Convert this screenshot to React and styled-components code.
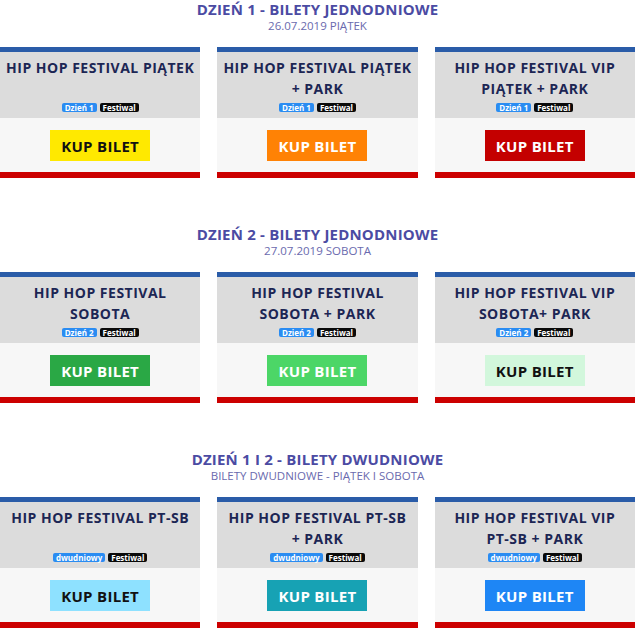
import React from 'react';
import styled, { createGlobalStyle } from 'styled-components';

const GlobalStyle = createGlobalStyle`
  body {
    margin: 0;
    background: #ffffff;
    font-family: "Open Sans", "Noto Sans", sans-serif;
  }
`;

const Page = styled.div`
  width: 635px;
`;

const Section = styled.section`
  margin-bottom: 47px;

  &:last-child {
    margin-bottom: 0;
  }
`;

const Heading = styled.h2`
  margin: 0;
  text-align: center;
  font-size: 15px;
  line-height: 18px;
  font-weight: 700;
  color: #4b4ba3;
  letter-spacing: 0.2px;
`;

const SubHeading = styled.div`
  text-align: center;
  font-size: 11.5px;
  line-height: 15px;
  color: #6a6aae;
  margin-bottom: 14px;
`;

const CardGrid = styled.div`
  display: grid;
  grid-template-columns: repeat(3, minmax(0, 1fr));
  column-gap: 17px;
`;

const Card = styled.div`
  border-top: 5px solid #2a5ca8;
  border-bottom: 6px solid #cc0000;
  background: #f7f7f7;
`;

const CardHeader = styled.div`
  height: 66px;
  box-sizing: border-box;
  padding: 5px 4px 6px;
  background: #dcdcdc;
  display: flex;
  flex-direction: column;
  align-items: center;
`;

const Title = styled.div`
  flex: 1;
  text-align: center;
  font-size: 14px;
  line-height: 21px;
  font-weight: 700;
  letter-spacing: 0.5px;
  color: #1c2654;
  white-space: nowrap;
`;

const Badges = styled.div`
  display: flex;
  gap: 3px;
`;

const Badge = styled.span`
  font-size: 8px;
  line-height: 9px;
  font-weight: 700;
  padding: 0 3px;
  border-radius: 2px;
  color: #ffffff;
  background: ${p => (p.$dark ? '#0a0a0a' : '#2a8cf2')};
`;

const CardBody = styled.div`
  display: flex;
  justify-content: center;
  padding: 12px 0 11px;
`;

const BuyButton = styled.a`
  display: flex;
  align-items: center;
  justify-content: center;
  width: 100px;
  height: 31px;
  background: ${p => p.$bg};
  color: ${p => (p.$light ? '#111111' : '#ffffff')};
  font-size: 15px;
  font-weight: 700;
  letter-spacing: 0.3px;
  text-decoration: none;
  cursor: pointer;
`;

const sections = [
  {
    title: 'DZIEŃ 1 - BILETY JEDNODNIOWE',
    sub: '26.07.2019 PIĄTEK',
    tag: 'Dzień 1',
    cards: [
      { lines: ['HIP HOP FESTIVAL PIĄTEK'], bg: '#ffe900', light: true },
      { lines: ['HIP HOP FESTIVAL PIĄTEK', '+ PARK'], bg: '#ff8205' },
      { lines: ['HIP HOP FESTIVAL VIP', 'PIĄTEK + PARK'], bg: '#c40000' },
    ],
  },
  {
    title: 'DZIEŃ 2 - BILETY JEDNODNIOWE',
    sub: '27.07.2019 SOBOTA',
    tag: 'Dzień 2',
    cards: [
      { lines: ['HIP HOP FESTIVAL', 'SOBOTA'], bg: '#2aa845' },
      { lines: ['HIP HOP FESTIVAL', 'SOBOTA + PARK'], bg: '#4cd667' },
      { lines: ['HIP HOP FESTIVAL VIP', 'SOBOTA+ PARK'], bg: '#d2f7dc', light: true },
    ],
  },
  {
    title: 'DZIEŃ 1 I 2 - BILETY DWUDNIOWE',
    sub: 'BILETY DWUDNIOWE - PIĄTEK I SOBOTA',
    tag: 'dwudniowy',
    cards: [
      { lines: ['HIP HOP FESTIVAL PT-SB'], bg: '#8ee1ff', light: true },
      { lines: ['HIP HOP FESTIVAL PT-SB', '+ PARK'], bg: '#17a2b4' },
      { lines: ['HIP HOP FESTIVAL VIP', 'PT-SB + PARK'], bg: '#1e86f5' },
    ],
  },
];

function App() {
  return (
    <Page>
      <GlobalStyle />
      {sections.map((section, i) => (
        <Section key={i}>
          <Heading>{section.title}</Heading>
          <SubHeading>{section.sub}</SubHeading>
          <CardGrid>
            {section.cards.map((card, j) => (
              <Card key={j}>
                <CardHeader>
                  <Title>
                    {card.lines.map((line, k) => (
                      <div key={k}>{line}</div>
                    ))}
                  </Title>
                  <Badges>
                    <Badge>{section.tag}</Badge>
                    <Badge $dark>Festiwal</Badge>
                  </Badges>
                </CardHeader>
                <CardBody>
                  <BuyButton $bg={card.bg} $light={card.light}>KUP BILET</BuyButton>
                </CardBody>
              </Card>
            ))}
          </CardGrid>
        </Section>
      ))}
    </Page>
  );
}

export default App;
